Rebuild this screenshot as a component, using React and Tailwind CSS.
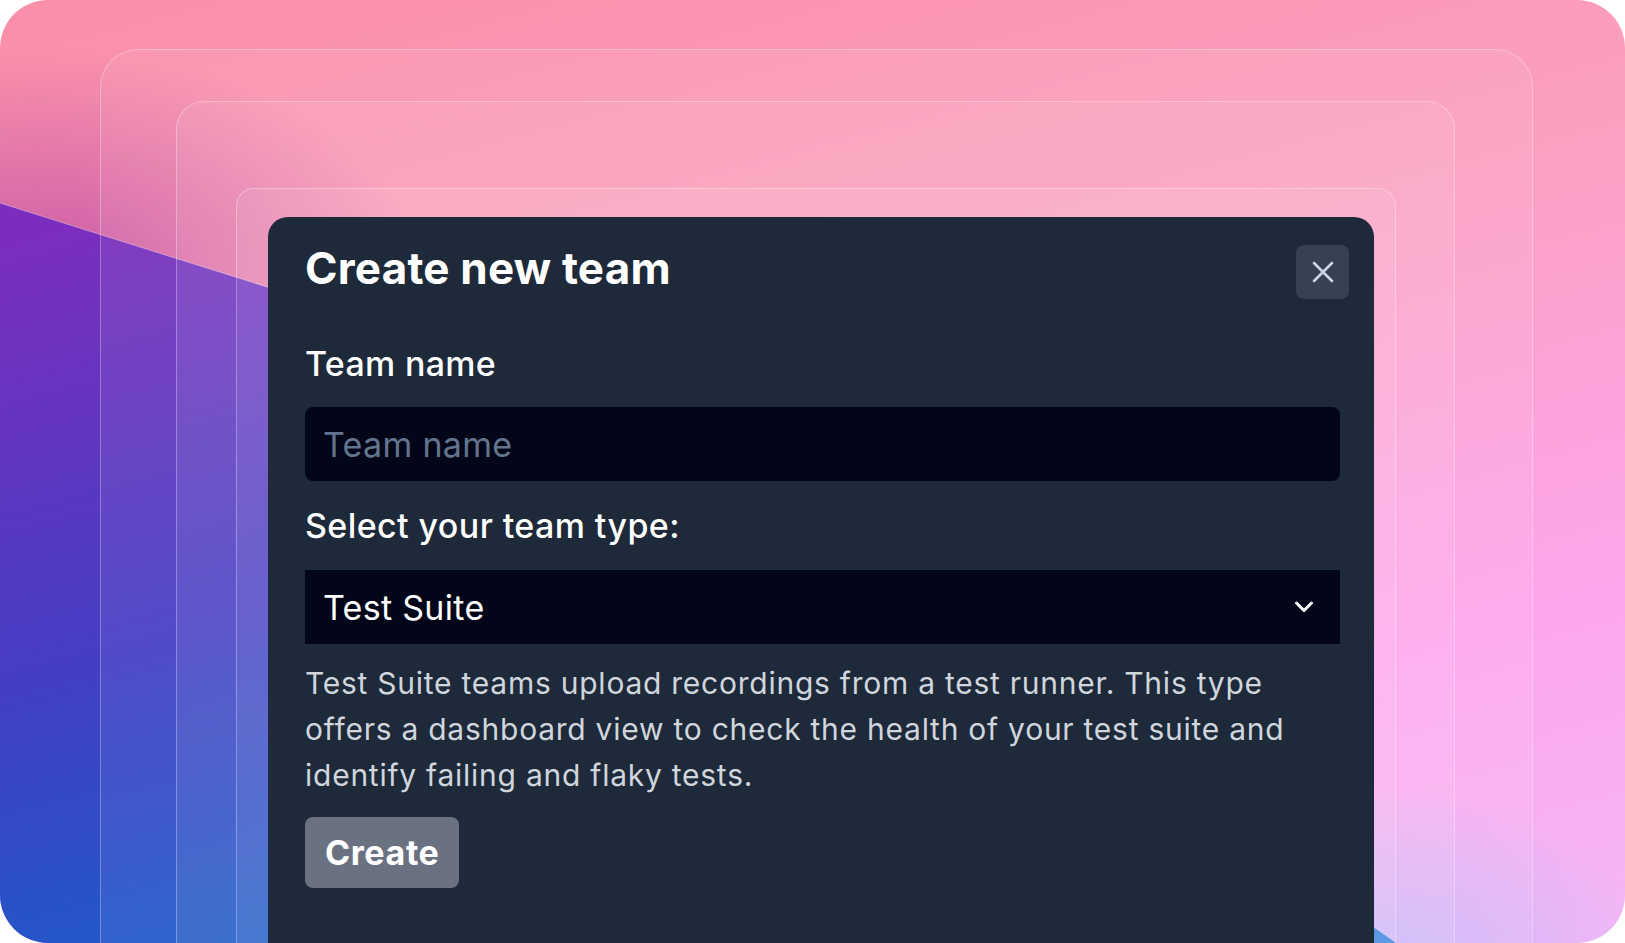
import React from "react";

function CloseIcon() {
  return (
    <svg width="22" height="22" viewBox="0 0 22 22" fill="none">
      <path d="M2 2L20 20M20 2L2 20" stroke="currentColor" strokeWidth="2.6" strokeLinecap="round" />
    </svg>
  );
}

function Chevron() {
  return (
    <svg width="20" height="14" viewBox="0 0 20 14" fill="none">
      <path d="M2.5 3L10 10.5L17.5 3" stroke="currentColor" strokeWidth="3" strokeLinecap="round" strokeLinejoin="round" />
    </svg>
  );
}

function CreateTeamModal() {
  return (
    <div className="min-h-[1000px] rounded-[20px] bg-gray-800 pl-[37px] pr-[34px] pt-[25px]">
      {/* Header */}
      <div className="flex items-start justify-between">
        <h2 className="text-[44px] font-bold leading-[53px] tracking-[0.2px] text-white">Create new team</h2>
        <button className="-mr-[9px] mt-[3px] flex h-[54px] w-[53px] items-center justify-center rounded-lg bg-gray-700 text-slate-300">
          <CloseIcon />
        </button>
      </div>

      {/* Team name */}
      <label className="mt-[39px] block text-[34px] font-medium leading-[51px] tracking-[0.3px] text-white">Team name</label>
      <input
        type="text"
        placeholder="Team name"
        className="mt-[18px] block h-[74px] w-full rounded-lg bg-slate-950 px-[18px] text-[34px] tracking-[0.3px] text-white outline-none placeholder:text-slate-500"
      />

      {/* Team type */}
      <label className="mt-[19px] block text-[34px] font-medium leading-[51px] tracking-[0.4px] text-white">
        Select your team type:
      </label>
      <div className="mt-[19px] flex h-[74px] items-center justify-between bg-slate-950 pl-[18px] pr-[26px] text-[34px] tracking-[0.3px] text-white">
        <span>Test Suite</span>
        <Chevron />
      </div>

      <p className="mt-[16px] text-[30px] leading-[46px] tracking-[0.75px] text-gray-300">
        Test Suite teams upload recordings from a test runner. This type
        <br />
        offers a dashboard view to check the health of your test suite and
        <br />
        identify failing and flaky tests.
      </p>

      <button className="mt-[19px] h-[71px] rounded-lg bg-gray-500 px-[20px] text-[34px] font-bold tracking-[0.6px] text-white">
        Create
      </button>
    </div>
  );
}

export default function App() {
  return (
    <div className="min-h-screen bg-white font-['Inter',sans-serif]">
      <div className="relative h-[943px] w-[1625px] overflow-hidden rounded-[48px] [background-image:radial-gradient(260px_170px_at_1390px_960px,rgba(196,184,250,0.9),transparent),radial-gradient(380px_220px_at_40px_270px,rgba(190,76,160,0.8),transparent),linear-gradient(165deg,#fa8ea8_0%,#fba0c0_40%,#fea6ee_75%,#f3b8f6_100%)]">
        {/* purple / blue slab */}
        <div className="absolute inset-0 [clip-path:polygon(0_203px,620px_398px,1396px_943px,0_943px)] [background-image:linear-gradient(165deg,#7b2ebd_18%,#433ec3_50%,#1660c9_78%,#3d8ce2_100%)]" />
        <svg className="absolute inset-0" width="1625" height="943">
          <line x1="0" y1="203" x2="620" y2="398" stroke="white" strokeOpacity="0.35" strokeWidth="1" />
        </svg>

        {/* nested frames */}
        <div className="relative h-full pl-[100px] pr-[92px] pt-[49px]">
          <div className="h-[1100px] rounded-[38px] border border-white/30 bg-white/[0.07] pl-[75px] pr-[77px] pt-[51px]">
            <div className="h-[1100px] rounded-[28px] border border-white/30 bg-white/[0.07] pl-[59px] pr-[58px] pt-[86px]">
              <div className="h-[1100px] rounded-[18px] border border-white/30 bg-white/[0.07] pl-[31px] pr-[21px] pt-[28px]">
                <CreateTeamModal />
              </div>
            </div>
          </div>
        </div>
      </div>
    </div>
  );
}
